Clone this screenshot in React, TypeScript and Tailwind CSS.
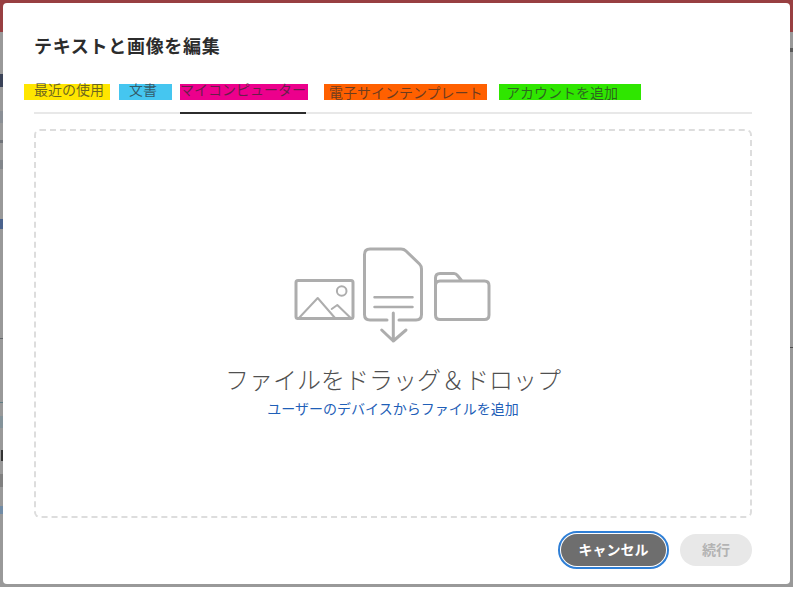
const jp = "font-['Noto_Sans_CJK_JP','Noto_Sans',sans-serif]";

function UploadArt() {
  return (
    <svg width="198" height="98" viewBox="0 0 198 98" fill="none" stroke="#adadad" strokeWidth="3" strokeLinecap="round" strokeLinejoin="round" className="ml-[-1px]">
      <rect x="2" y="34.500" width="57" height="38" rx="2" />
      <circle cx="47.700" cy="45" r="4.800" strokeWidth="2" />
      <path d="M4 73 L23.700 52 L41 72 M37.700 63 L43.300 59 L56.700 72" strokeWidth="2" />
      <path d="M93 74 H76 Q70.500 74 70.500 68.500 V8.500 Q70.500 3 76 3 H107 Q110 3 112 5 L125.500 18 Q127.500 20 127.500 23 V68.500 Q127.500 74 122 74 H105" />
      <path d="M80.500 51.300 H118.500 M80.500 61 H118.500" strokeWidth="2.500" />
      <path d="M99.300 67 V95 M87.700 84 L99.300 95 L112 84" />
      <path d="M141.500 40 V32 Q141.500 27.500 146 27.500 H160 Q162 27.500 163.500 29.500 L168 35 H190.500 Q195 35 195 39.500 V69 Q195 73.500 190.500 73.500 H146 Q141.500 73.500 141.500 69 V39.500 Q141.500 35 146 35 H168" />
    </svg>
  );
}

const marks = [
  "left-0 top-[74px] w-[3px] h-[13px] bg-[#3a4257]",
  "left-0 top-[111px] w-[3px] h-[12px] bg-[#8a8f95]",
  "left-0 top-[140px] w-[3px] h-[3px] bg-[#70747a]",
  "left-0 top-[160px] w-[3px] h-[9px] bg-[#82868b]",
  "left-0 top-[219px] w-[3px] h-[10px] bg-[#4a628c]",
  "left-0 top-[338px] w-[3px] h-[1px] bg-[#62666a]",
  "left-0 top-[402px] w-[3px] h-[1px] bg-[#5f7d85]",
  "left-0 top-[416px] w-[3px] h-[12px] bg-[#84939a]",
  "left-[1px] top-[450px] w-[2px] h-[11px] bg-[#333333]",
  "left-0 top-[474px] w-[3px] h-[13px] bg-[#808080]",
  "left-0 top-[506px] w-[3px] h-[8px] bg-[#718ba5]",
  "right-0 top-[48px] w-[3px] h-[4px] bg-[#5a5a5a]",
  "right-0 top-[347px] w-[3px] h-[1px] bg-[#4c4c4c]",
];

export default function App() {
  return (
    <div className={`w-[800px] h-[590px] bg-white overflow-hidden ${jp}`}>
      <div className="relative w-[793px] h-[587px] bg-[#999999]">
        <div className="h-[32px] bg-[#983f41]" />
        {marks.map((m) => (
          <div key={m} className={`absolute ${m}`} />
        ))}
        <div className="absolute left-[3px] top-[3px] w-[787px] h-[581px] bg-white rounded-[4px] pt-[29px] px-[31px] flex flex-col">
          <h1 className="text-[18px] leading-[26px] font-bold text-[#2c2c2c] tracking-[0.7px]">テキストと画像を編集</h1>
          <div className="relative h-[28px] mt-[26px] -ml-[10px] w-[728px] flex text-[14px] text-[#2c2c2c]/70">
            <div className="w-[86px] h-[16px] bg-[#ffe600] pl-[10px] leading-[10px] whitespace-nowrap">最近の使用</div>
            <div className="w-[53px] h-[16px] ml-[9px] bg-[#45c6f0] pl-[10px] leading-[10px]">文書</div>
            <div className="w-[128px] h-[16px] ml-[8px] bg-[#ec008c] leading-[10px] whitespace-nowrap">マイコンピューター</div>
            <div className="w-[163px] h-[16px] ml-[16px] bg-[#ff6000] pl-[5px] leading-[16px] whitespace-nowrap">電子サインテンプレート</div>
            <div className="w-[142px] h-[16px] ml-[12px] bg-[#2fe600] pl-[7px] leading-[16px] whitespace-nowrap">アカウントを追加</div>
          </div>
          <div className="relative h-[2px] w-[718px] bg-[#e8e8e8]">
            <div className="absolute left-[146px] top-0 w-[126px] h-[2px] bg-[#2c2c2c]" />
          </div>
          <div className="mt-[15px] w-[718px] h-[389px] border-2 border-dashed border-[#dddddd] rounded-[6px] flex flex-col items-center pt-[115px]">
            <UploadArt />
            <div className="mt-[17px] text-[24px] leading-[36px] font-light text-[#505050]">ファイルをドラッグ＆ドロップ</div>
            <div className="mt-[1px] text-[14px] leading-[20px] text-[#1f5fb8]">ユーザーのデバイスからファイルを追加</div>
          </div>
          <div className="mt-[16px] w-[718px] flex justify-end items-center gap-[14px]">
            <button className="w-[105px] h-[32px] pb-[2px] rounded-full bg-[#6e6e6e] text-white text-[14px] font-bold outline-2 outline-offset-1 outline-[#2f7fd6]">キャンセル</button>
            <button className="w-[72px] h-[32px] pb-[2px] rounded-full bg-[#e8e8e8] text-[#b3b3b3] text-[14px] font-bold">続行</button>
          </div>
        </div>
      </div>
    </div>
  );
}
